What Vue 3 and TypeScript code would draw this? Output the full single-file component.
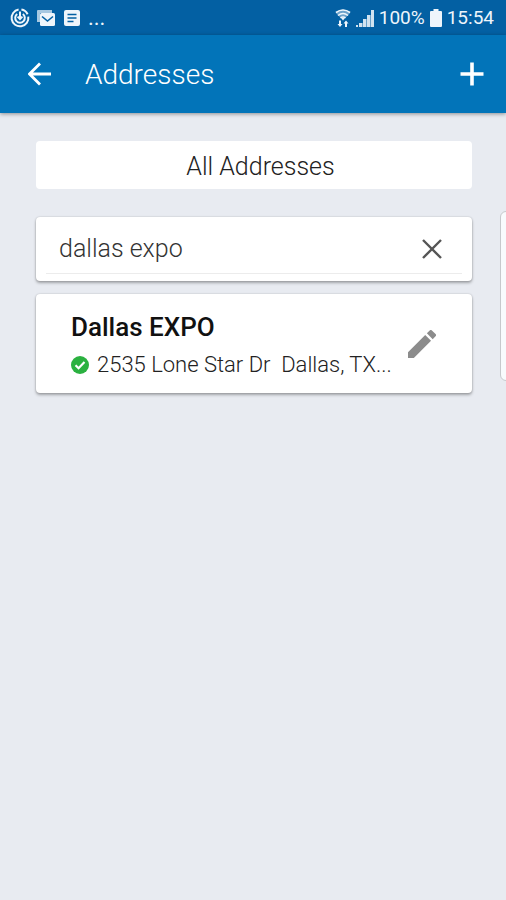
<script setup lang="ts">
import { computed, ref } from 'vue'

interface Address {
  id: number
  name: string
  line: string
}

const addresses: Address[] = [
  { id: 1, name: 'Dallas EXPO', line: '2535 Lone Star Dr\u00a0 Dallas, TX...' },
]

const query = ref('dallas expo')
const results = computed(() =>
  addresses.filter((a) => a.name.toLowerCase().includes(query.value.trim().toLowerCase())),
)
</script>

<template>
  <div class="screen">
    <div class="status">
      <div class="status-group">
        <svg class="status-icon" viewBox="0 0 20 20" aria-hidden="true">
          <g fill="none" stroke="currentColor" stroke-width="2">
            <path d="M8.6 1.6A8.4 8.4 0 1 0 18.3 8.6" />
            <path d="M11.4 1.6A8.4 8.4 0 0 1 17.6 6.2" />
            <path d="M7.2 6A4.8 4.8 0 1 0 12.8 6" />
            <path d="M10 3.5v7M7.6 8.6L10 11l2.4-2.4" />
          </g>
        </svg>
        <svg class="status-icon" viewBox="0 0 20 20" aria-hidden="true">
          <path d="M1 14V3q0-1 1-1h14v3H4v9z" fill="currentColor" opacity=".7" />
          <rect x="4" y="5" width="15" height="13" rx="1.5" fill="currentColor" />
          <path d="M6 8.5l5.5 4.5L17 8.5" fill="none" stroke="#0360a3" stroke-width="1.6" />
        </svg>
        <svg class="status-icon" viewBox="0 0 20 20" aria-hidden="true">
          <rect x="2" y="2" width="16" height="16" rx="2" fill="currentColor" />
          <path d="M5.500 6.500h9M5.500 10h9M5.500 13.500h6" fill="none" stroke="#0360a3" stroke-width="1.6" />
        </svg>
        <span class="more">...</span>
      </div>
      <div class="status-group right">
        <svg class="wifi" viewBox="0 0 16 20" aria-hidden="true">
          <path d="M.5 4.500Q8-1.500 15.500 4.500L8 12.500z" fill="currentColor" opacity=".45" />
          <g fill="none" stroke="currentColor" stroke-width="1.6">
            <path d="M1 4.500Q8-.5 15 4.500M3 7.500Q8 3.500 13 7.500M5.500 10Q8 8 10.500 10" />
          </g>
          <path d="M6.500 10h3L8 12.500zM5 19l-2.500-3H4v-3.500h2V16h1.500zM11 12.500l2.500 3H12V19h-2v-3.500H8.500z" fill="currentColor" />
        </svg>
        <svg class="signal" viewBox="0 0 18 18" aria-hidden="true">
          <path d="M0 18v-2h2v2zM3 18v-4h3.500v4zM7 18v-8h3.500v8zM11 18V6h3.500v12zM15 18V1h3v17z" fill="currentColor" opacity=".88" />
        </svg>
        <span class="percent">100%</span>
        <svg class="battery" viewBox="0 0 12 18" aria-hidden="true">
          <path d="M3.500 0h5v2H11q1 0 1 1v14q0 1-1 1H1q-1 0-1-1V3q0-1 1-1h2.500z" fill="currentColor" />
        </svg>
        <time>15:54</time>
      </div>
    </div>

    <header class="bar">
      <button class="icon-button" type="button" aria-label="Back">
        <svg class="bar-icon" viewBox="0 0 24 24" aria-hidden="true">
          <path d="M23 12H2M12 1.500L1.500 12 12 22.500" fill="none" stroke="currentColor" stroke-width="2.800" />
        </svg>
      </button>
      <h1>Addresses</h1>
      <button class="icon-button" type="button" aria-label="Add address">
        <svg class="bar-icon" viewBox="0 0 24 24" aria-hidden="true">
          <path d="M12 .5v23M.5 12h23" fill="none" stroke="currentColor" stroke-width="3.600" />
        </svg>
      </button>
    </header>

    <main class="content">
      <button class="all" type="button">All Addresses</button>

      <div class="card search">
        <div class="field">
          <input v-model="query" type="text" aria-label="Search addresses" />
          <button class="icon-button clear" type="button" aria-label="Clear search" @click="query = ''">
            <svg class="clear-icon" viewBox="0 0 20 20" aria-hidden="true">
              <path d="M1 1l18 18M19 1L1 19" fill="none" stroke="currentColor" stroke-width="2.400" />
            </svg>
          </button>
        </div>
      </div>

      <article v-for="address in results" :key="address.id" class="card address">
        <div class="details">
          <h2>{{ address.name }}</h2>
          <p>
            <svg class="check" viewBox="0 0 20 20" aria-hidden="true">
              <circle cx="10" cy="10" r="10" fill="#2bb140" />
              <path d="M5 10.200l3.400 3.400L15 6.800" fill="none" stroke="#fff" stroke-width="2.400" />
            </svg>
            <span>{{ address.line }}</span>
          </p>
        </div>
        <button class="icon-button" type="button" aria-label="Edit address">
          <svg class="pencil" viewBox="3 3 18 18" aria-hidden="true">
            <path
              d="M3 17.250V21h3.750L17.810 9.940l-3.750-3.750L3 17.250zM20.710 7.040a1 1 0 0 0 0-1.410l-2.340-2.340a1 1 0 0 0-1.410 0l-1.830 1.830 3.750 3.750 1.830-1.830z"
              fill="currentColor"
            />
          </svg>
        </button>
      </article>
    </main>

    <div class="edge-handle"></div>
  </div>
</template>

<style>
body {
  margin: 0;
  background: #e8ebf1;
}
</style>

<style scoped>
.screen {
  position: relative;
  min-height: 100vh;
  overflow: hidden;
  background: #e8ebf1;
  color: #222;
  font-family: Roboto, "Liberation Sans", sans-serif;
  font-weight: 300;
}

button,
input {
  margin: 0;
  padding: 0;
  border: 0;
  background: none;
  color: inherit;
  font: inherit;
}

svg {
  display: block;
  flex: none;
}

.status {
  display: flex;
  justify-content: space-between;
  align-items: center;
  box-sizing: border-box;
  height: 35px;
  padding: 0 12px 0 10px;
  background: #0360a3;
  color: #eef5fb;
  font-size: 19px;
  font-weight: 400;
}

.status-group {
  display: flex;
  align-items: center;
  gap: 6px;
}

.status-group.right {
  gap: 5px;
}

.more {
  font-size: 22px;
}

.status-icon {
  width: 20px;
  height: 20px;
}

.wifi {
  width: 16px;
  height: 20px;
}

.signal {
  width: 18px;
  height: 18px;
}

.battery {
  width: 12px;
  height: 18px;
}

.bar {
  display: flex;
  align-items: center;
  box-sizing: border-box;
  height: 78px;
  padding: 0 22px 0 28px;
  background: #0274b9;
  box-shadow: 0 1px 4px rgba(0, 0, 0, 0.4);
  color: #fff;
}

.icon-button {
  flex: none;
  cursor: pointer;
}

.bar-icon {
  width: 24px;
  height: 24px;
}

h1 {
  flex: 1;
  margin: 0 0 0 33px;
  padding-top: 2px;
  font-size: 28px;
  font-weight: 300;
  line-height: 36px;
}

.content {
  display: flex;
  flex-direction: column;
  padding: 28px 34px 28px 36px;
}

.all {
  height: 48px;
  margin-bottom: 28px;
  padding: 2px 0 0 13px;
  border-radius: 4px;
  background: #fff;
  font-size: 25px;
}

.card {
  border-radius: 4px;
  background: #fff;
  box-shadow: 0 2px 3px rgba(0, 0, 0, 0.3), 0 0 2px rgba(0, 0, 0, 0.2);
}

.search {
  height: 64px;
  margin-bottom: 13px;
}

.field {
  display: flex;
  align-items: center;
  box-sizing: border-box;
  height: 57px;
  margin: 0 10px;
  padding: 7px 20px 0 13px;
  border-bottom: 1px solid #ececec;
}

input {
  flex: 1;
  min-width: 0;
  color: #333;
  font-size: 25px;
  line-height: 32px;
  outline: none;
}

.clear {
  color: #555;
}

.clear-icon {
  width: 20px;
  height: 20px;
}

.address {
  display: flex;
  align-items: center;
  gap: 8px;
  min-height: 99px;
  padding-right: 36px;
  padding-left: 35px;
}

.details {
  flex: 1;
  min-width: 0;
  padding-top: 5px;
}

h2 {
  margin: 0;
  color: #111;
  font-size: 26px;
  font-weight: 500;
  line-height: 38px;
}

p {
  display: flex;
  align-items: center;
  gap: 8px;
  margin: 0;
  font-size: 22px;
  line-height: 38px;
  white-space: pre;
}

.check {
  width: 18px;
  height: 18px;
}

.pencil {
  width: 28px;
  height: 28px;
  color: #8c8c8c;
}

.edge-handle {
  position: absolute;
  top: 211px;
  right: -8px;
  width: 12px;
  height: 168px;
  border: 1px solid #c6c9cc;
  border-radius: 6px;
  background: #f8fbfd;
}
</style>
